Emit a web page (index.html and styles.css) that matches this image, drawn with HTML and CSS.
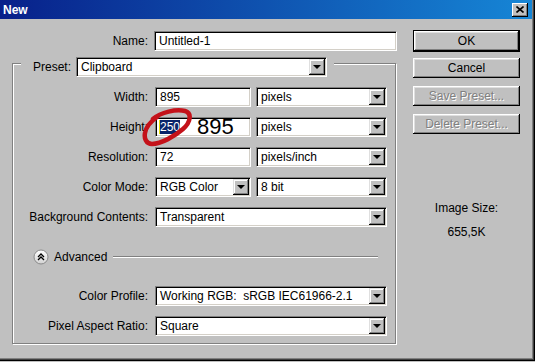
FILE: index.html
```html
<!DOCTYPE html>
<html lang="en">
<head>
    <meta charset="UTF-8">
    <title>New</title>
    <link rel="stylesheet" href="styles.css">
</head>
<body>
    <div class="window">
        <div class="titlebar">
            <span class="title">New</span>
            <button class="close" title="Close">
                <svg width="8" height="7" viewBox="0 0 8 7"><path d="M0.5 0.5 L7.5 6.5 M7.5 0.5 L0.5 6.5" stroke="#000" stroke-width="1.6" fill="none"/></svg>
            </button>
        </div>

        <div class="body">
            <div class="form">
                <div class="row name-row">
                    <label class="lbl">Name:</label>
                    <div class="field w-name">Untitled-1</div>
                </div>

                <div class="group">
                    <div class="group-head">
                        <label class="head-lbl">Preset:</label>
                        <div class="field w-preset"><span>Clipboard</span><i class="arrow"></i></div>
                    </div>

                    <div class="row">
                        <label class="lbl">Width:</label>
                        <div class="field w-s">895</div>
                        <div class="field w-m"><span>pixels</span><i class="arrow"></i></div>
                    </div>
                    <div class="row height-row">
                        <label class="lbl">Height:</label>
                        <div class="field w-s"><span class="picked">250</span><span class="big">895</span></div>
                        <div class="field w-m"><span>pixels</span><i class="arrow"></i></div>
                        <svg class="scribble" width="52" height="40" viewBox="0 0 52 40">
                            <path d="M11 11 C19 4 34 1 43 3 C50 5 49 14 41 21 C33 28 19 36 10 36 C4 36 2 30 3 25 C4 19 8 14 15 9" fill="none" stroke="#c4121a" stroke-width="4.5" stroke-linecap="round"/>
                        </svg>
                    </div>
                    <div class="row">
                        <label class="lbl">Resolution:</label>
                        <div class="field w-s">72</div>
                        <div class="field w-m"><span>pixels/inch</span><i class="arrow"></i></div>
                    </div>
                    <div class="row">
                        <label class="lbl">Color Mode:</label>
                        <div class="field w-s"><span>RGB Color</span><i class="arrow"></i></div>
                        <div class="field w-m"><span>8 bit</span><i class="arrow"></i></div>
                    </div>
                    <div class="row">
                        <label class="lbl">Background Contents:</label>
                        <div class="field w-l"><span>Transparent</span><i class="arrow"></i></div>
                    </div>

                    <div class="advanced">
                        <svg class="adv-icon" width="16" height="16" viewBox="0 0 16 16">
                            <defs>
                                <linearGradient id="knob" x1="0" y1="0" x2="0" y2="1">
                                    <stop offset="0" stop-color="#ffffff"/>
                                    <stop offset="1" stop-color="#d2d2d2"/>
                                </linearGradient>
                            </defs>
                            <circle cx="8" cy="8" r="7" fill="url(#knob)" stroke="#8a8a8a"/>
                            <path d="M5 8 L8 5 L11 8 M5 11 L8 8 L11 11" fill="none" stroke="#000" stroke-width="1.3"/>
                        </svg>
                        <span>Advanced</span>
                        <div class="rule"></div>
                    </div>

                    <div class="row profile-row">
                        <label class="lbl">Color Profile:</label>
                        <div class="field w-l"><span>Working RGB:&nbsp; sRGB IEC61966-2.1</span><i class="arrow"></i></div>
                    </div>
                    <div class="row">
                        <label class="lbl">Pixel Aspect Ratio:</label>
                        <div class="field w-l"><span>Square</span><i class="arrow"></i></div>
                    </div>
                </div>
            </div>

            <div class="side">
                <button class="btn default">OK</button>
                <button class="btn cancel">Cancel</button>
                <button class="btn off">Save Preset...</button>
                <button class="btn off">Delete Preset...</button>
                <div class="size-label">Image Size:</div>
                <div class="size-value">655,5K</div>
            </div>
        </div>
    </div>
</body>
</html>
```

FILE: styles.css
```css
body {
    margin: 0;
    font-family: "Liberation Sans", Arial, sans-serif;
    font-size: 12px;
    color: #000;
    background: #c0c0c0;
}
.window {
    width: 535px;
    height: 361px;
    box-sizing: border-box;
    background: #c0c0c0;
    box-shadow: inset -1px -1px 0 #000, inset -2px -2px 0 #404040, inset -3px -3px 0 #808080;
}
.titlebar {
    height: 19px;
    margin-right: 3px;
    padding: 0 4px 0 3px;
    display: flex;
    align-items: center;
    justify-content: space-between;
    background: linear-gradient(90deg, #08208a, #1686d6);
}
.title {
    color: #fff;
    font-weight: bold;
}
.close {
    width: 16px;
    height: 14px;
    padding: 0;
    border: 0;
    display: flex;
    align-items: center;
    justify-content: center;
    background: #c0c0c0;
    box-shadow: inset -1px -1px 0 #000, inset 1px 1px 0 #fff, inset -2px -2px 0 #808080;
}
.body {
    display: flex;
    padding-top: 12px;
}
.form {
    width: 397px;
    padding-left: 12px;
    box-sizing: border-box;
}
.row {
    display: flex;
    align-items: center;
    height: 20px;
    margin-top: 10px;
}
.name-row {
    margin-top: 0;
}
.lbl {
    flex: none;
    width: 135px;
    margin-right: 7px;
    text-align: right;
}
.name-row .lbl {
    width: 136px;
    margin-right: 6px;
}

/* sunken text box / combo box */
.field {
    flex: none;
    height: 20px;
    box-sizing: border-box;
    display: flex;
    align-items: center;
    padding: 0 1px 0 4px;
    background: #fff;
    border: 1px solid;
    border-color: #808080 #fff #fff #808080;
    box-shadow: inset 1px 1px 0 #000, inset -1px -1px 0 #d4d0c8;
    white-space: nowrap;
}
.field span {
    flex: 1;
}
.arrow {
    flex: none;
    width: 16px;
    height: 16px;
    position: relative;
    background: #c0c0c0;
    box-shadow: inset -1px -1px 0 #000, inset 1px 1px 0 #dfdfdf, inset -2px -2px 0 #808080, inset 2px 2px 0 #fff;
}
.arrow::after {
    content: "";
    position: absolute;
    left: 4px;
    top: 6px;
    border-left: 4px solid transparent;
    border-right: 4px solid transparent;
    border-top: 4px solid #000;
}
.w-name { width: 243px; }
.w-preset { width: 251px; }
.w-s { width: 96px; }
.w-m { width: 131px; margin-left: 5px; }
.w-l { width: 232px; }

.group {
    width: 384px;
    box-sizing: border-box;
    margin-top: 12px;
    padding-bottom: 7px;
    border: 1px solid #808080;
    box-shadow: inset 1px 1px 0 #fff, 1px 1px 0 #fff;
}
.group-head {
    display: flex;
    align-items: center;
    width: fit-content;
    margin: -7px 0 1px 8px;
    padding: 0 7px 0 12px;
    background: #c0c0c0;
}
.head-lbl {
    margin-right: 5px;
}

.height-row {
    position: relative;
}
.picked {
    flex: none !important;
    background: #0a246a;
    color: #fff;
    box-shadow: -1px 0 0 #e8e000;
}
.big {
    flex: none !important;
    margin-left: 17px;
    font-size: 22px;
    line-height: 20px;
}
.scribble {
    position: absolute;
    left: 129px;
    top: -9px;
}

.advanced {
    display: flex;
    align-items: center;
    height: 20px;
    margin-top: 20px;
    padding-left: 20px;
}
.adv-icon {
    margin-right: 5px;
}
.rule {
    flex: 1;
    margin: 0 17px 0 6px;
    border-top: 1px solid #808080;
    border-bottom: 1px solid #fff;
}
.profile-row {
    margin-top: 19px;
}

.side {
    width: 107px;
    margin-left: 16px;
    display: flex;
    flex-direction: column;
    align-items: center;
}
.btn {
    width: 107px;
    height: 20px;
    padding: 0;
    border: 0;
    margin-top: 8px;
    font-family: inherit;
    font-size: 12px;
    color: #000;
    background: #c0c0c0;
    box-shadow: inset -1px -1px 0 #000, inset 1px 1px 0 #fff, inset -2px -2px 0 #808080, inset 2px 2px 0 #dfdfdf;
}
.btn.default {
    height: 22px;
    margin-top: -1px;
    border: 1px solid #000;
}
.btn.cancel {
    margin-top: 6px;
}
.btn.off {
    color: #808080;
    text-shadow: 1px 1px 0 #fff;
}
.size-label {
    margin-top: 67px;
    line-height: 14px;
}
.size-value {
    margin-top: 10px;
    line-height: 14px;
}
```
